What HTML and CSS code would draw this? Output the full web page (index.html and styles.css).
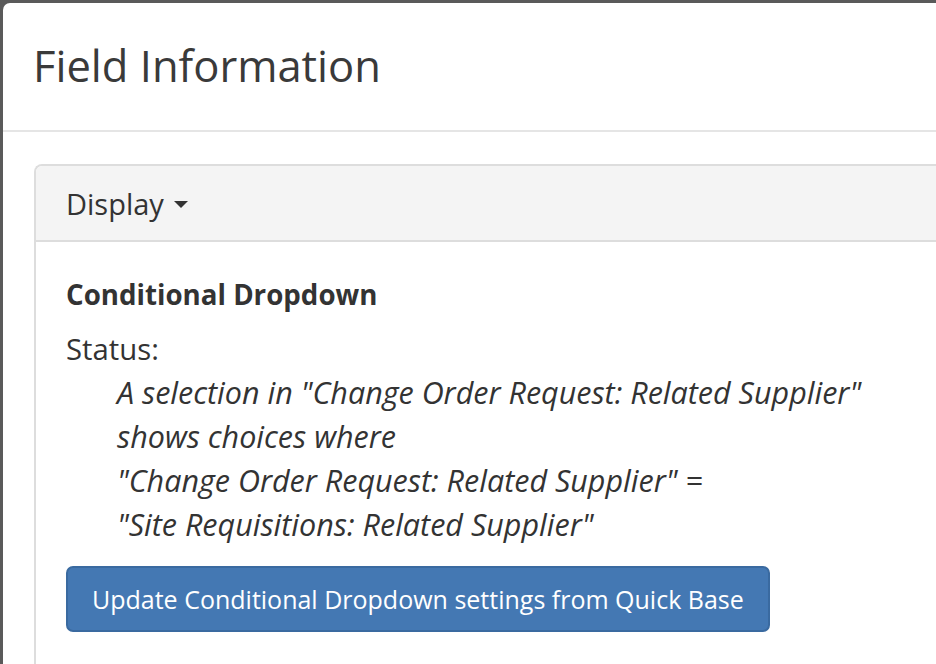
FILE: index.html
```html
<!DOCTYPE html>
<html lang="en">
<head>
<meta charset="utf-8">
<title>Field Information</title>
<link rel="stylesheet" href="styles.css">
</head>
<body>
<div class="modal">
  <div class="modal-header">
    <h1 class="modal-title">Field Information</h1>
  </div>
  <div class="modal-body">
    <div class="panel">
      <div class="panel-heading">
        <span class="dropdown-toggle">Display</span>
        <span class="caret"></span>
      </div>
      <div class="panel-body">
        <h4 class="section-title">Conditional Dropdown</h4>
        <div class="status-label">Status:</div>
        <div class="status-text">
          <div>A selection in "Change Order Request: Related Supplier"</div>
          <div>shows choices where</div>
          <div>"Change Order Request: Related Supplier" =</div>
          <div>"Site Requisitions: Related Supplier"</div>
        </div>
        <button class="btn-primary" type="button">Update Conditional Dropdown settings from Quick Base</button>
      </div>
    </div>
  </div>
</div>
</body>
</html>
```
FILE: styles.css
```css
html, body {
  margin: 0;
  height: 100%;
  overflow: hidden;
}
body {
  background: #5a5a5a;
  padding: 3px 0 0 3px;
  box-sizing: border-box;
  font-family: "Open Sans", "Liberation Sans", sans-serif;
  color: #333;
}
.modal {
  background: #fff;
  border-top-left-radius: 7px;
  height: 100%;
}
.modal-header {
  height: 127px;
  border-bottom: 2px solid #e5e5e5;
  display: flex;
  align-items: center;
  padding-left: 30px;
}
.modal-title {
  margin: 0;
  font-size: 43.5px;
  font-weight: 400;
  line-height: 1.2;
  color: #3a3a3a;
}
.modal-body {
  padding: 32px 0 0 31px;
}
.panel {
  border: 2px solid #ddd;
  border-right: none;
  border-top-left-radius: 8px;
  min-height: 520px;
}
.panel-heading {
  height: 74px;
  background: #f4f4f4;
  border-bottom: 2px solid #ddd;
  border-top-left-radius: 6px;
  display: flex;
  align-items: center;
  padding-left: 30px;
  font-size: 29px;
}
.caret {
  width: 0;
  height: 0;
  margin-left: 10px;
  margin-top: 2px;
  border-top: 7px solid #333;
  border-left: 7px solid transparent;
  border-right: 7px solid transparent;
}
.panel-body {
  padding: 32px 0 0 30px;
  font-size: 29.3px;
}
.section-title {
  margin: 0 0 14px;
  font-size: 27.7px;
  font-weight: 700;
  line-height: 40px;
}
.status-label {
  line-height: 42px;
}
.status-text {
  font-style: italic;
  font-size: 30.5px;
  line-height: 44px;
  margin-left: 51px;
}
.btn-primary {
  display: block;
  margin-top: 20px;
  height: 66px;
  padding: 0 24px;
  font-family: inherit;
  font-size: 25px;
  color: #fff;
  background: #4478b3;
  border: 2px solid #3a6aa0;
  border-radius: 7px;
}
```
